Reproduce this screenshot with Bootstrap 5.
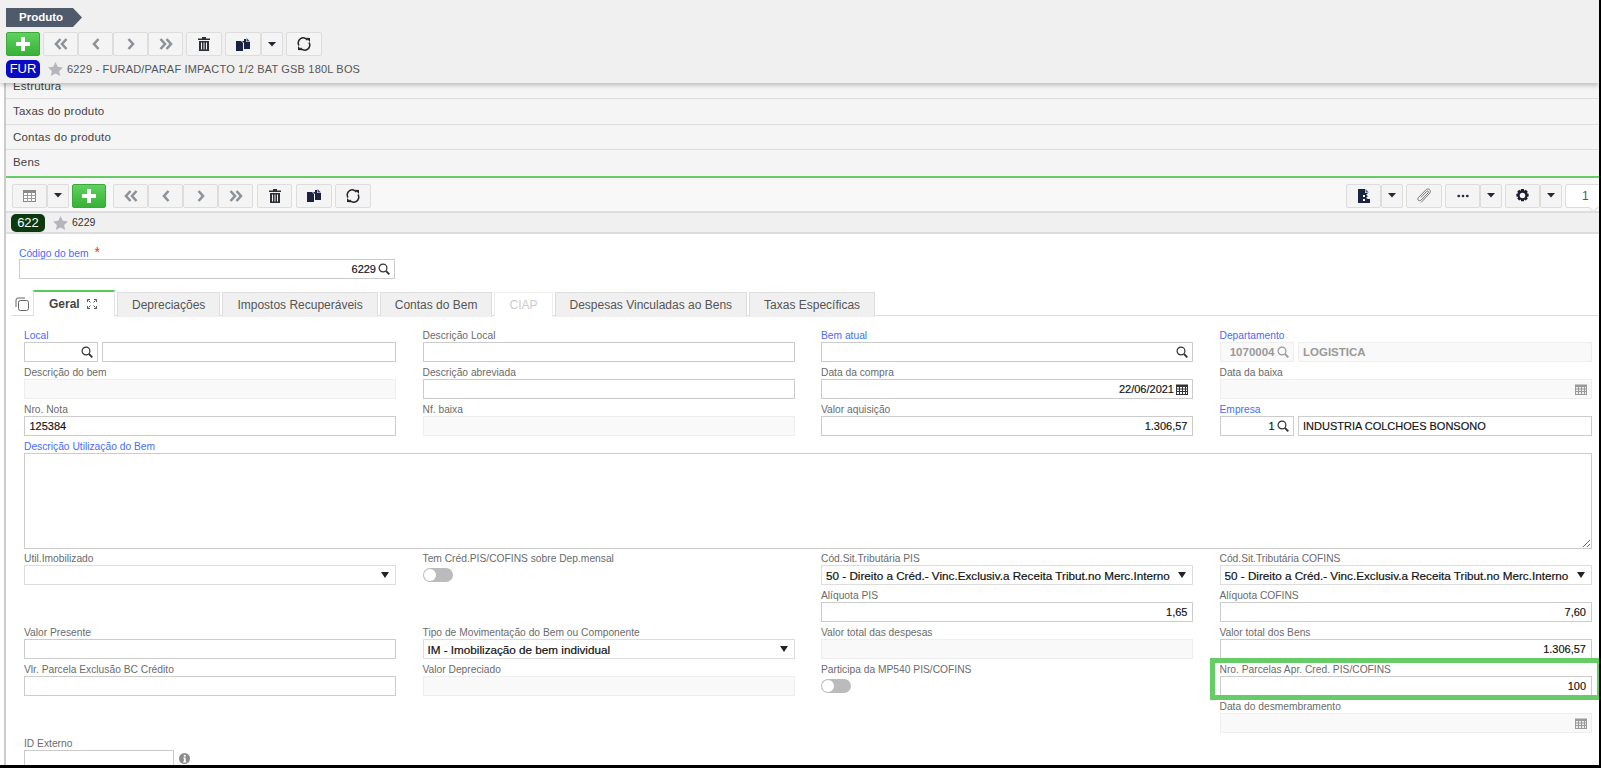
<!DOCTYPE html>
<html lang="pt-BR">
<head>
    <meta charset="UTF-8">
    <meta name="viewport" content="width=device-width, initial-scale=1.0">
    <title>Produto</title>
    <link href="https://cdn.jsdelivr.net/npm/bootstrap@5.3.0/dist/css/bootstrap.min.css" rel="stylesheet">
    <style>
        html, body {
            height: 768px;
            overflow: hidden;
            background: #000;
        }
        body {
            font-family: "Liberation Sans", Arial, sans-serif;
            font-size: 11px;
            color: #333;
        }
        .page-frame {
            width: 1599px;
            height: 765px;
            overflow: hidden;
            background: #fff;
        }
        .top-head {
            position: relative;
            z-index: 5;
            height: 83px;
            padding: 8px 0 0 6px;
            background: #f0f0f0;
            box-shadow: 0 2px 5px rgba(0,0,0,.25);
        }
        .crumb {
            width: 76px;
            height: 19px;
            line-height: 19px;
            padding-left: 13px;
            color: #fff;
            font-size: 11.5px;
            font-weight: 700;
            background: #4f5a6b;
            clip-path: polygon(0 0, 67px 0, 100% 50%, 67px 100%, 0 100%);
        }
        .tool-row {
            display: flex;
            gap: 3px;
        }
        .tool-btn {
            display: flex;
            align-items: center;
            justify-content: center;
            width: 36px;
            height: 24px;
            padding: 0;
            background: #f4f4f4;
            border: 1px solid #ddd;
            border-radius: 2px;
        }
        .tool-btn:hover { background: #eee; border-color: #ccc; }
        .nav-btn { width: 35px; }
        .caret-btn { width: 22px; }
        .add-btn {
            width: 34px;
            background: linear-gradient(#5fd15f, #37b237);
            border-color: #3aa93a;
        }
        .btn-group > .tool-btn { border-radius: 2px; }
        .tag {
            display: inline-block;
            width: 34px;
            height: 18px;
            line-height: 17px;
            text-align: center;
            color: #fff;
            font-size: 13px;
            border-radius: 5px;
        }
        .tag-blue { background: #0a0ac4; }
        .tag-green { background: #0b3a10; }
        .title-row {
            display: flex;
            align-items: center;
            margin-top: 4px;
            height: 18px;
        }
        .title-text {
            margin-left: 4px;
            color: #555;
            font-size: 11px;
            letter-spacing: .18px;
        }
        .side-body {
            margin: -9px 0 0 4px;
            border-left: 2px solid #ccc;
            height: 691px;
            overflow: hidden;
        }
        .list-group .acc-item {
            height: 25.4px;
            padding: 0 0 0 7px;
            line-height: 25px;
            background: #f5f5f5;
            color: #444;
            font-size: 11.5px;
            letter-spacing: .2px;
            border: 0;
            border-bottom: 1px solid #ddd;
            border-radius: 0;
        }
        .list-group-flush > .acc-item.acc-last:last-child {
            height: 28.3px;
            border-bottom: 2px solid #6c6;
        }
        .tools-two {
            height: 35px;
            padding: 5.500px 0 0 6px;
            background: #f8f8f8;
            border-bottom: 2px solid #ddd;
        }
        .gap-nav { margin-left: 4px; }
        .nudge { margin-left: 1px; }
        .page-count {
            position: relative;
            width: 36px;
            height: 24px;
            margin-right: -2px;
            line-height: 23px;
            padding-left: 16px;
            font-size: 12px;
            color: #555;
            background: #fff;
            border: 1px solid #ddd;
            border-radius: 2px;
        }
        .page-count::after {
            content: "";
            position: absolute;
            right: 3px;
            bottom: -4px;
            width: 7px;
            height: 7px;
            background: #fff;
            border-right: 1px solid #ddd;
            border-bottom: 1px solid #ddd;
            transform: rotate(45deg);
        }
        .rec-bar {
            display: flex;
            align-items: center;
            height: 21px;
            padding-left: 5px;
            background: #f0f0f0;
            border-bottom: 2px solid #ddd;
            font-size: 10.5px;
            color: #333;
        }
        .rec-bar .rec-code { margin-left: 4px; }
        .code-box {
            width: 376px;
            padding: 10px 0 0 13px;
            box-sizing: content-box;
            height: 48px;
        }
        .fld-label {
            display: block;
            height: 15px;
            line-height: 17px;
            margin: 0;
            font-size: 10.25px;
            color: #6b6b6b;
            white-space: nowrap;
        }
        .fld-label.is-link { color: #4a6cf7; }
        .req { color: #e0342f; font-size: 14px; margin-left: 3px; }
        .fld {
            height: 20px;
            padding: 0 4.500px;
            font-size: 11px;
            color: #111;
            -webkit-text-stroke: .15px #111;
            background-color: #fff;
            border: 1px solid #ccc;
            border-radius: 0;
            min-height: 0;
        }
        .fld:disabled, .fld[readonly] {
            background-color: #f9f9f9;
            border-color: #eee;
            color: #999;
            -webkit-text-stroke: 0;
            font-size: 11.5px;
            font-weight: 700;
        }
        .fld-wrap { position: relative; flex: 1 1 auto; }
        .fld-wrap svg {
            position: absolute;
            top: 4px;
            right: 5px;
        }
        .pad-icon .fld { padding-right: 18px; }
        .fld-sel {
            height: 20px;
            min-height: 0;
            padding: 0 16px 0 4px;
            font-size: 11.7px;
            -webkit-text-stroke: .2px #111;
            color: #111;
            border: 1px solid #ddd;
            border-radius: 0;
            background-position: right 5px center;
            background-size: 10px 6px;
            --bs-form-select-bg-img: url("data:image/svg+xml,%3csvg xmlns='http://www.w3.org/2000/svg' viewBox='0 0 10 6'%3e%3cpath fill='%23222' d='M1 0h8L5 6z'/%3e%3c/svg%3e");
        }
        .code-fld { width: 74px; flex: 0 0 74px; }
        .tabs-line {
            display: flex;
            align-items: flex-end;
            padding-left: 9px;
        }
        .tabs-copy { margin: 0 4px 0 0; align-self: center; }
        .tabs-main {
            gap: 2px;
            border: 0;
            margin-bottom: -1px;
        }
        .tabs-main .nav-link {
            height: 25px;
            padding: 0 14px;
            line-height: 25px;
            font-size: 12px;
            color: #555;
            background: #f0f0f0;
            border: 1px solid #ddd;
            border-bottom: 0;
            border-radius: 0;
        }
        .tabs-main .nav-link.active {
            display: flex;
            align-items: center;
            gap: 7px;
            height: 27px;
            width: 82px;
            margin-top: -2px;
            padding: 0 15px;
            font-weight: 700;
            color: #444;
            background: #fff;
            border-top: 2px solid #5c5;
            border-bottom: 1px solid #fff;
            position: relative;
            z-index: 2;
        }
        .tabs-main .nav-link.disabled {
            color: #ccc;
            background: #fff;
            border-color: #eee;
        }
        .tab-body {
            padding: 10.500px 7.500px 0 13px;
            margin-left: 5px;
            border-top: 1px solid #ddd;
        }
        .fld-row { --bs-gutter-x: 26.5px; }
        .fld-cell { height: 35px; margin-bottom: 2px; }
        .fld-cell.no-fld { visibility: hidden; }
        .text-area {
            height: 96px;
            padding: 4px 5px;
            font-size: 11.5px;
            border: 1px solid #ccc;
            border-radius: 0;
            resize: vertical;
        }
        .area-cell { height: 112.5px; }
        .switch-off {
            display: block;
            width: 30px;
            height: 14px;
            margin-top: 3px;
            background: #bbb;
            border-radius: 7px;
            position: relative;
        }
        .switch-off::before {
            content: "";
            position: absolute;
            left: 1px;
            top: 1px;
            width: 12px;
            height: 12px;
            border-radius: 50%;
            background: #fff;
        }
        .mark-box {
            position: absolute;
            top: -3px;
            left: -10px;
            right: -10px;
            bottom: -4px;
            border: 5px solid #66cc66;
            pointer-events: none;
        }
        .id-fld { width: 150px; }
        .info-dot { margin-left: 5px; margin-top: 3px; }
    </style>
</head>
<body>
    <!-- icon set -->
    <svg width="0" height="0" class="position-absolute">
        <symbol id="i-plus" viewBox="0 0 14 14"><path fill="#fff" d="M5 0h4v5h5v4H9v5H5V9H0V5h5z"/></symbol>
        <symbol id="i-first" viewBox="0 0 16 14"><path fill="none" stroke="#8d9299" stroke-width="2.6" d="M7.500 2 3 7l4.500 5M13.500 2 9 7l4.500 5"/></symbol>
        <symbol id="i-last" viewBox="0 0 16 14"><path fill="none" stroke="#8d9299" stroke-width="2.6" d="M2.500 2 7 7l-4.500 5M8.500 2 13 7l-4.500 5"/></symbol>
        <symbol id="i-prev" viewBox="0 0 10 14"><path fill="none" stroke="#8d9299" stroke-width="2.6" d="M7.500 2 3 7l4.500 5"/></symbol>
        <symbol id="i-next" viewBox="0 0 10 14"><path fill="none" stroke="#8d9299" stroke-width="2.6" d="M2.500 2 7 7l-4.500 5"/></symbol>
        <symbol id="i-trash" viewBox="0 0 12 14"><path fill="#2b2f36" d="M4 0h4v1.500h4V3H0V1.500h4zM1 4h10v10H1zm2 1.500V12.500h1V5.500zm2.500 0V12.500h1V5.500zm2.500 0V12.500h1V5.500z" fill-rule="evenodd"/></symbol>
        <symbol id="i-copy" viewBox="0 0 14 13"><path fill="#1c2340" d="M0 3h5l2 2v8H0z"/><path fill="#1c2340" d="M8 1h2v3h4v7H8V5L6 3h2z"/><path fill="#3f4a66" d="M10.500 0 14 3.400h-3.500z"/></symbol>
        <symbol id="i-sync" viewBox="0 0 14 14"><path fill="none" stroke="#23262c" stroke-width="1.500" d="M2 8.500A5 5 0 0 1 10.500 3.200M12 5.500A5 5 0 0 1 3.500 10.800"/><path fill="#23262c" d="M9 .8 13 1v4zM5 13.200 1 13V9z"/></symbol>
        <symbol id="i-grid" viewBox="0 0 13 12"><rect x=".5" y=".5" width="12" height="11" fill="#fff" stroke="#888"/><path fill="#8a8a8a" d="M0 0h13v3H0z"/><path stroke="#999" d="M0 5.500h13M0 8.500h13M4.500 3v9M8.500 3v9"/></symbol>
        <symbol id="i-caret" viewBox="0 0 8 5"><path fill="#222a38" d="M0 0h8L4 4.500z"/></symbol>
        <symbol id="i-file" viewBox="0 0 12 14"><path fill="#1c2340" d="M0 0h7l0 4h3l-2 2 2 1-2 2 2 1 2 0v4H0z"/><path fill="#3c6f8c" d="M7.500 0 11 3.500H7.500z"/><path fill="#fff" d="M5 6h2v2H5zM5 10h2v2H5z"/></symbol>
        <symbol id="i-clip" viewBox="0 0 16 16"><path fill="none" stroke="#666" stroke-width=".9" d="M5 14.500 13.300 5.800c1.500-1.600 1.200-3.300.2-4.200-1-.9-2.500-.9-3.800.4L2.600 9.300c-1 1-1 2.200-.2 3 .8.700 1.900.6 2.800-.3l7-7.200c.5-.6.400-1.200 0-1.600-.4-.3-1-.3-1.500.2L4.800 9.500"/></symbol>
        <symbol id="i-dots" viewBox="0 0 14 4"><circle cx="2" cy="2" r="1.600" fill="#222a38"/><circle cx="7" cy="2" r="1.600" fill="#222a38"/><circle cx="12" cy="2" r="1.600" fill="#222a38"/></symbol>
        <symbol id="i-gear" viewBox="0 0 14 14"><path fill="#1a1e2a" fill-rule="evenodd" d="M5.500 0h3l.4 2 1.700-1.100 2.100 2.100-1.100 1.700 2 .4v3l-2 .4 1.100 1.700-2.100 2.100-1.700-1.100-.4 2h-3l-.4-2-1.700 1.100-2.100-2.100 1.100-1.700-2-.4v-3l2-.4L1.300 3l2.100-2.100 1.700 1.100zM7 4a3 3 0 1 0 0 6 3 3 0 0 0 0-6z"/></symbol>
        <symbol id="i-star" viewBox="0 0 16 15"><path fill="#b4b6bb" d="M8 0l2.400 5.100 5.600.7-4.100 3.800 1.100 5.400L8 12.300 3 15l1.100-5.400L0 5.800l5.600-.7z"/></symbol>
        <symbol id="i-search" viewBox="0 0 12 12"><circle cx="5" cy="5" r="3.900" fill="none" stroke="#333" stroke-width="1.200"/><path stroke="#333" stroke-width="1.800" d="m8 8 3.300 3.300"/></symbol>
        <symbol id="i-search-off" viewBox="0 0 12 12"><circle cx="5" cy="5" r="3.900" fill="none" stroke="#999" stroke-width="1.200"/><path stroke="#999" stroke-width="1.800" d="m8 8 3.300 3.300"/></symbol>
        <symbol id="i-cal" viewBox="0 0 12 12"><path fill="#333" d="M0 1.500h12V12H0z"/><path fill="#fff" d="M1 4h2v1.500H1zm3 0h2v1.500H4zm3 0h2v1.500H7zm3 0h1v1.500h-1zM1 6.500h2V8H1zm3 0h2V8H4zm3 0h2V8H7zm3 0h1V8h-1zM1 9h2v2H1zm3 0h2v2H4zm3 0h2v2H7zm3 0h1v2h-1z"/></symbol>
        <symbol id="i-cal-off" viewBox="0 0 12 12"><path fill="#999" d="M0 1.500h12V12H0z"/><path fill="#eee" d="M1 4h2v1.500H1zm3 0h2v1.500H4zm3 0h2v1.500H7zm3 0h1v1.500h-1zM1 6.500h2V8H1zm3 0h2V8H4zm3 0h2V8H7zm3 0h1V8h-1zM1 9h2v2H1zm3 0h2v2H4zm3 0h2v2H7zm3 0h1v2h-1z"/></symbol>
        <symbol id="i-expand" viewBox="0 0 10 10"><path fill="none" stroke="#555" d="M.5 3V.5H3M7 .500h2.500V3M.5 7v2.500H3M7 9.500h2.500V7M3.500 3.500l-2-2M6.500 3.500l2-2M3.500 6.500l-2 2M6.500 6.500l2 2"/></symbol>
        <symbol id="i-panes" viewBox="0 0 14 14"><rect x="3.500" y="3.500" width="10" height="10" rx="2" fill="#fff" stroke="#666"/><path fill="none" stroke="#666" d="M1 10V3a2 2 0 0 1 2-2h7"/></symbol>
        <symbol id="i-info" viewBox="0 0 12 12"><circle cx="6" cy="6" r="6" fill="#8c8c8c"/><circle cx="6.300" cy="3" r="1.200" fill="#fff"/><path fill="#fff" d="M4.600 5h2.700v4.300h.8v1H4.400v-1h.9V6h-.7z"/></symbol>
    </svg>

    <div class="page-frame">
        <!-- Header do produto -->
        <header class="top-head">
            <div class="crumb mb-1">Produto</div>
            <div class="tool-row" style="margin-top:5px">
                <button class="tool-btn add-btn"><svg width="14" height="14"><use href="#i-plus"/></svg></button>
                <div class="btn-group">
                    <button class="tool-btn nav-btn"><svg width="16" height="14"><use href="#i-first"/></svg></button>
                    <button class="tool-btn nav-btn"><svg width="10" height="14"><use href="#i-prev"/></svg></button>
                    <button class="tool-btn nav-btn"><svg width="10" height="14"><use href="#i-next"/></svg></button>
                    <button class="tool-btn nav-btn"><svg width="16" height="14"><use href="#i-last"/></svg></button>
                </div>
                <button class="tool-btn"><svg width="12" height="14"><use href="#i-trash"/></svg></button>
                <div class="btn-group">
                    <button class="tool-btn"><svg width="14" height="13"><use href="#i-copy"/></svg></button>
                    <button class="tool-btn caret-btn"><svg width="8" height="5"><use href="#i-caret"/></svg></button>
                </div>
                <button class="tool-btn"><svg width="14" height="14"><use href="#i-sync"/></svg></button>
            </div>
            <div class="title-row">
                <span class="tag tag-blue">FUR</span>
                <svg class="ms-2" width="15" height="14"><use href="#i-star"/></svg>
                <span class="title-text">6229 - FURAD/PARAF IMPACTO 1/2 BAT GSB 180L BOS</span>
            </div>
        </header>

        <div class="side-body">
            <div class="list-group list-group-flush">
                <div class="list-group-item acc-item">Estrutura</div>
                <div class="list-group-item acc-item">Taxas do produto</div>
                <div class="list-group-item acc-item">Contas do produto</div>
                <div class="list-group-item acc-item acc-last">Bens</div>
            </div>

            <!-- Toolbar do bem -->
            <div class="tools-two d-flex justify-content-between">
                <div class="tool-row">
                    <div class="btn-group">
                        <button class="tool-btn nav-btn"><svg width="13" height="12"><use href="#i-grid"/></svg></button>
                        <button class="tool-btn caret-btn"><svg width="8" height="5"><use href="#i-caret"/></svg></button>
                    </div>
                    <button class="tool-btn add-btn"><svg width="14" height="14"><use href="#i-plus"/></svg></button>
                    <div class="btn-group gap-nav">
                        <button class="tool-btn nav-btn"><svg width="16" height="14"><use href="#i-first"/></svg></button>
                        <button class="tool-btn nav-btn"><svg width="10" height="14"><use href="#i-prev"/></svg></button>
                        <button class="tool-btn nav-btn"><svg width="10" height="14"><use href="#i-next"/></svg></button>
                        <button class="tool-btn nav-btn"><svg width="16" height="14"><use href="#i-last"/></svg></button>
                    </div>
                    <button class="tool-btn nav-btn nudge"><svg width="12" height="14"><use href="#i-trash"/></svg></button>
                    <button class="tool-btn nudge"><svg width="14" height="13"><use href="#i-copy"/></svg></button>
                    <button class="tool-btn"><svg width="14" height="14"><use href="#i-sync"/></svg></button>
                </div>
                <div class="tool-row">
                    <div class="btn-group">
                        <button class="tool-btn nav-btn"><svg width="12" height="14"><use href="#i-file"/></svg></button>
                        <button class="tool-btn caret-btn"><svg width="8" height="5"><use href="#i-caret"/></svg></button>
                    </div>
                    <button class="tool-btn"><svg width="16" height="16"><use href="#i-clip"/></svg></button>
                    <div class="btn-group">
                        <button class="tool-btn nav-btn"><svg width="12" height="4"><use href="#i-dots"/></svg></button>
                        <button class="tool-btn caret-btn"><svg width="8" height="5"><use href="#i-caret"/></svg></button>
                    </div>
                    <div class="btn-group">
                        <button class="tool-btn nav-btn"><svg width="13" height="13"><use href="#i-gear"/></svg></button>
                        <button class="tool-btn caret-btn"><svg width="8" height="5"><use href="#i-caret"/></svg></button>
                    </div>
                    <div class="page-count">1</div>
                </div>
            </div>

            <div class="rec-bar">
                <span class="tag tag-green">622</span>
                <svg class="ms-2" width="15" height="14"><use href="#i-star"/></svg>
                <span class="rec-code">6229</span>
            </div>

            <div class="code-box">
                <label class="fld-label is-link">Código do bem <span class="req">*</span></label>
                <div class="fld-wrap pad-icon">
                    <input class="form-control fld text-end" value="6229">
                    <svg width="12" height="12"><use href="#i-search"/></svg>
                </div>
            </div>

            <!-- Abas -->
            <div class="tabs-line">
                <svg class="tabs-copy" width="14" height="14"><use href="#i-panes"/></svg>
                <ul class="nav nav-tabs tabs-main">
                    <li class="nav-item"><a class="nav-link active" href="#">Geral <svg width="10" height="10"><use href="#i-expand"/></svg></a></li>
                    <li class="nav-item"><a class="nav-link" href="#">Depreciações</a></li>
                    <li class="nav-item"><a class="nav-link" href="#">Impostos Recuperáveis</a></li>
                    <li class="nav-item"><a class="nav-link" href="#">Contas do Bem</a></li>
                    <li class="nav-item"><a class="nav-link disabled" href="#">CIAP</a></li>
                    <li class="nav-item"><a class="nav-link" href="#">Despesas Vinculadas ao Bens</a></li>
                    <li class="nav-item"><a class="nav-link" href="#">Taxas Específicas</a></li>
                </ul>
            </div>

            <div class="tab-body">
                <div class="row fld-row">
                    <div class="col-3">
                        <div class="fld-cell">
                            <label class="fld-label is-link">Local</label>
                            <div class="d-flex gap-1">
                                <div class="fld-wrap code-fld pad-icon"><input class="form-control fld"><svg width="12" height="12"><use href="#i-search"/></svg></div>
                                <input class="form-control fld">
                            </div>
                        </div>
                        <div class="fld-cell"><label class="fld-label">Descrição do bem</label><input class="form-control fld" disabled></div>
                        <div class="fld-cell"><label class="fld-label">Nro. Nota</label><input class="form-control fld" value="125384"></div>
                    </div>
                    <div class="col-3">
                        <div class="fld-cell"><label class="fld-label">Descrição Local</label><input class="form-control fld"></div>
                        <div class="fld-cell"><label class="fld-label">Descrição abreviada</label><input class="form-control fld"></div>
                        <div class="fld-cell"><label class="fld-label">Nf. baixa</label><input class="form-control fld" disabled></div>
                    </div>
                    <div class="col-3">
                        <div class="fld-cell">
                            <label class="fld-label is-link">Bem atual</label>
                            <div class="fld-wrap pad-icon"><input class="form-control fld"><svg width="12" height="12"><use href="#i-search"/></svg></div>
                        </div>
                        <div class="fld-cell">
                            <label class="fld-label">Data da compra</label>
                            <div class="fld-wrap pad-icon"><input class="form-control fld text-end" value="22/06/2021"><svg width="12" height="12"><use href="#i-cal"/></svg></div>
                        </div>
                        <div class="fld-cell"><label class="fld-label">Valor aquisição</label><input class="form-control fld text-end" value="1.306,57"></div>
                    </div>
                    <div class="col-3">
                        <div class="fld-cell">
                            <label class="fld-label is-link">Departamento</label>
                            <div class="d-flex gap-1">
                                <div class="fld-wrap code-fld pad-icon"><input class="form-control fld text-end" value="1070004" disabled><svg width="12" height="12"><use href="#i-search-off"/></svg></div>
                                <input class="form-control fld" value="LOGISTICA" disabled>
                            </div>
                        </div>
                        <div class="fld-cell">
                            <label class="fld-label">Data da baixa</label>
                            <div class="fld-wrap pad-icon"><input class="form-control fld" disabled><svg width="12" height="12"><use href="#i-cal-off"/></svg></div>
                        </div>
                        <div class="fld-cell">
                            <label class="fld-label is-link">Empresa</label>
                            <div class="d-flex gap-1">
                                <div class="fld-wrap code-fld pad-icon"><input class="form-control fld text-end" value="1"><svg width="12" height="12"><use href="#i-search"/></svg></div>
                                <input class="form-control fld" value="INDUSTRIA COLCHOES BONSONO">
                            </div>
                        </div>
                    </div>
                </div>

                <div class="area-cell">
                    <label class="fld-label is-link">Descrição Utilização do Bem</label>
                    <textarea class="form-control text-area"></textarea>
                </div>

                <div class="row fld-row">
                    <div class="col-3">
                        <div class="fld-cell">
                            <label class="fld-label">Util.Imobilizado</label>
                            <select class="form-select fld-sel"><option></option></select>
                        </div>
                        <div class="fld-cell no-fld"></div>
                        <div class="fld-cell"><label class="fld-label">Valor Presente</label><input class="form-control fld"></div>
                        <div class="fld-cell"><label class="fld-label">Vlr. Parcela Exclusão BC Crédito</label><input class="form-control fld"></div>
                        <div class="fld-cell no-fld"></div>
                        <div class="fld-cell d-block">
                            <label class="fld-label">ID Externo</label>
                            <div class="d-flex">
                                <input class="form-control fld id-fld">
                                <svg class="info-dot" width="11" height="11"><use href="#i-info"/></svg>
                            </div>
                        </div>
                    </div>
                    <div class="col-3">
                        <div class="fld-cell">
                            <label class="fld-label">Tem Créd.PIS/COFINS sobre Dep.mensal</label>
                            <span class="switch-off"></span>
                        </div>
                        <div class="fld-cell no-fld"></div>
                        <div class="fld-cell">
                            <label class="fld-label">Tipo de Movimentação do Bem ou Componente</label>
                            <select class="form-select fld-sel"><option>IM - Imobilização de bem individual</option></select>
                        </div>
                        <div class="fld-cell"><label class="fld-label">Valor Depreciado</label><input class="form-control fld" disabled></div>
                    </div>
                    <div class="col-3">
                        <div class="fld-cell">
                            <label class="fld-label">Cód.Sit.Tributária PIS</label>
                            <select class="form-select fld-sel"><option>50 - Direito a Créd.- Vinc.Exclusiv.a Receita Tribut.no Merc.Interno</option></select>
                        </div>
                        <div class="fld-cell"><label class="fld-label">Alíquota PIS</label><input class="form-control fld text-end" value="1,65"></div>
                        <div class="fld-cell"><label class="fld-label">Valor total das despesas</label><input class="form-control fld" disabled></div>
                        <div class="fld-cell">
                            <label class="fld-label">Participa da MP540 PIS/COFINS</label>
                            <span class="switch-off"></span>
                        </div>
                    </div>
                    <div class="col-3">
                        <div class="fld-cell">
                            <label class="fld-label">Cód.Sit.Tributária COFINS</label>
                            <select class="form-select fld-sel"><option>50 - Direito a Créd.- Vinc.Exclusiv.a Receita Tribut.no Merc.Interno</option></select>
                        </div>
                        <div class="fld-cell"><label class="fld-label">Alíquota COFINS</label><input class="form-control fld text-end" value="7,60"></div>
                        <div class="fld-cell"><label class="fld-label">Valor total dos Bens</label><input class="form-control fld text-end" value="1.306,57"></div>
                        <div class="fld-cell position-relative">
                            <label class="fld-label">Nro. Parcelas Apr. Cred. PIS/COFINS</label>
                            <input class="form-control fld text-end" value="100">
                            <div class="mark-box"></div>
                        </div>
                        <div class="fld-cell">
                            <label class="fld-label">Data do desmembramento</label>
                            <div class="fld-wrap pad-icon"><input class="form-control fld" disabled><svg width="12" height="12"><use href="#i-cal-off"/></svg></div>
                        </div>
                    </div>
                </div>
            </div>
        </div>
    </div>
    <script src="https://cdn.jsdelivr.net/npm/bootstrap@5.3.0/dist/js/bootstrap.bundle.min.js"></script>
</body>
</html>
